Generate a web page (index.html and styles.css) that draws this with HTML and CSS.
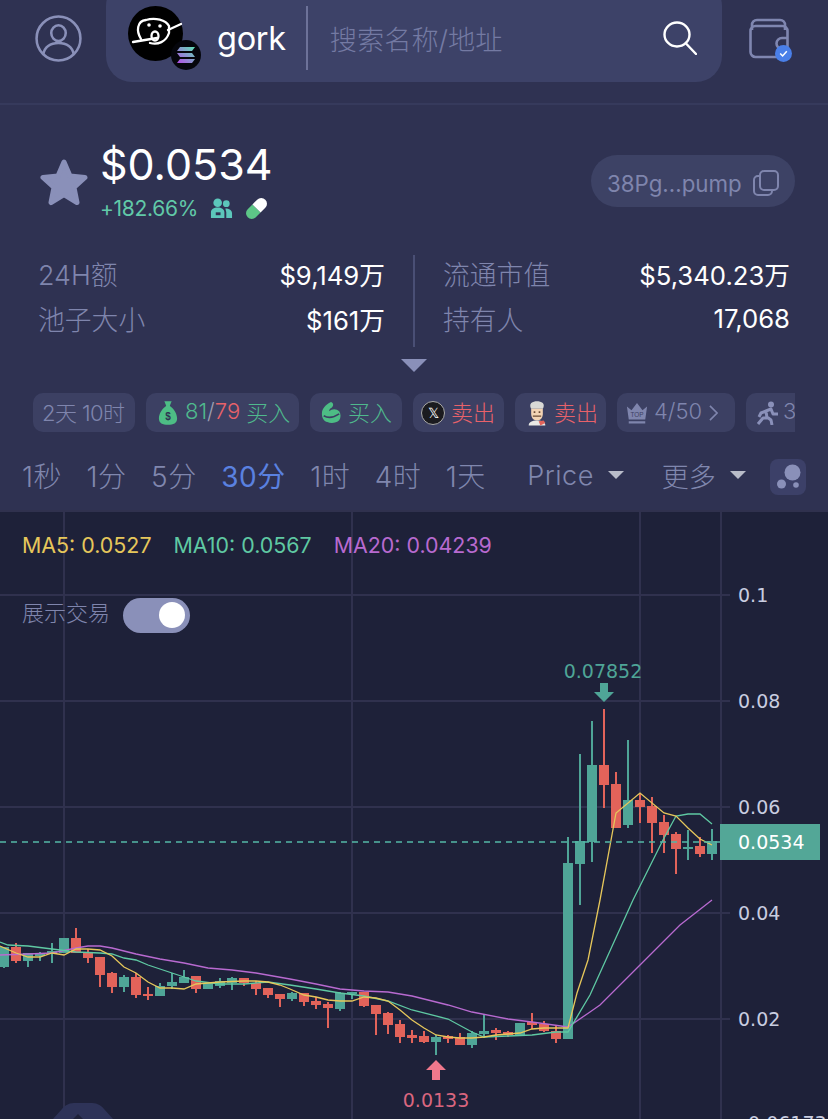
FILE: index.html
```html
<!DOCTYPE html>
<html lang="zh">
<head>
<meta charset="utf-8">
<title>gork</title>
<link rel="stylesheet" href="styles.css">
</head>
<body>
<div class="page">
  <header class="topbar">
    <svg class="user-icon" viewBox="0 0 48 48" fill="none" stroke="#8a90b9" stroke-width="2.6">
      <circle cx="24" cy="24" r="22.4"/>
      <ellipse cx="24" cy="18.5" rx="7.4" ry="8"/>
      <path d="M8.5 40c1-7 7-11.5 15.5-11.5S38.500 33 39.500 40"/>
    </svg>
    <div class="search">
      <div class="token-logo">
        <svg class="avatar" viewBox="0 0 55 55">
          <circle cx="27.500" cy="27.500" r="27.500" fill="#000"/>
          <g fill="none" stroke="#fff" stroke-width="2.300" stroke-linecap="round">
            <path d="M13 33C8 25 9 15 18 14C27 11 38 14 41 20L41 27C38 36 30 39 22 37"/>
            <path d="M5 36l24-4M40 24l13-6"/>
            <ellipse cx="27" cy="30" rx="3.500" ry="4.500"/>
          </g>
          <circle cx="21" cy="19" r="1.800" fill="#fff"/><circle cx="32" cy="20" r="1.800" fill="#fff"/>
        </svg>
        <svg class="chain" viewBox="0 0 30 30">
          <defs><linearGradient id="sol" x1="0" y1="1" x2="1" y2="0"><stop offset="0" stop-color="#b44be8"/><stop offset="1" stop-color="#5fe3b5"/></linearGradient></defs>
          <circle cx="15" cy="15" r="15" fill="#05060c"/>
          <path fill="url(#sol)" d="M9 7h15l-3 4H6zM6 13h15l3 4H9zM9 19h15l-3 4H6z"/>
        </svg>
      </div>
      <span class="token-name">gork</span>
      <span class="search-div"></span>
      <span class="placeholder">搜索名称/地址</span>
      <svg class="search-icon" viewBox="0 0 34 34" fill="none" stroke="#fff" stroke-width="2.4" stroke-linecap="round">
        <ellipse cx="14" cy="13.500" rx="12.500" ry="12"/><path d="M23 22.500l10 10.500"/>
      </svg>
    </div>
    <div class="wallet">
      <svg class="wallet-icon" viewBox="0 0 42 42" fill="none" stroke="#7f86b0" stroke-width="2.6" stroke-linejoin="round">
        <path d="M3 12V7c0-3 2-5 5-5h23c3 0 5 2 5 5v5"/>
        <rect x="1.500" y="8" width="37" height="31" rx="5"/>
        <path d="M39 20h-6a5 5 0 0 0 0 11h6"/>
      </svg>
      <span class="wallet-badge"><svg viewBox="0 0 10 10" fill="none" stroke="#fff" stroke-width="1.400"><path d="M2 5l2.200 2.200L8 3"/></svg></span>
    </div>
  </header>

  <section class="summary">
    <div class="price-row">
      <svg class="star" viewBox="0 0 48 48"><path fill="#8a90b9" stroke="#8a90b9" stroke-width="5" stroke-linejoin="round" d="M24 4l6 14 15 1.500-11 10 3 15-13-8-13 8 3-15-11-10L18 18z"/></svg>
      <div class="price-info">
        <div class="price">$0.0534</div>
        <div class="change">
          <span>+182.66%</span>
          <svg class="mini-icon" viewBox="0 0 24 22"><circle cx="8" cy="5" r="4.500" fill="#5cc7bb"/><circle cx="17" cy="6" r="3.500" fill="#5cc7bb"/><path fill="#5cc7bb" d="M1 21v-6c0-3 3-5 7-5s7 2 7 5v6zM16 11c4 0 7 2 7 5v5h-6v-6z"/><path fill="#2f3252" d="M6 15h5v3H6z"/></svg>
          <svg class="mini-icon" viewBox="0 0 24 24"><g transform="rotate(45 12 12)"><path d="M6 12h12v7a6 6 0 0 1-12 0z" fill="#5dc687"/><path d="M6 5a6 6 0 0 1 12 0v7H6z" fill="#fff"/></g></svg>
        </div>
      </div>
      <div class="address">
        <span class="address-text">38Pg...pump</span>
        <svg class="copy" viewBox="0 0 26 26" fill="none" stroke="#7f85ad" stroke-width="2"><rect x="7" y="1" width="18" height="19" rx="4"/><path d="M7 6H5a4 4 0 0 0-4 4v11a4 4 0 0 0 4 4h10a4 4 0 0 0 4-4v-1"/></svg>
      </div>
    </div>

    <div class="stats">
      <div class="stat-col">
        <div class="stat"><span class="label">24H额</span><span class="value">$9,149万</span></div>
        <div class="stat"><span class="label">池子大小</span><span class="value">$161万</span></div>
      </div>
      <div class="stat-sep"></div>
      <div class="stat-col">
        <div class="stat"><span class="label">流通市值</span><span class="value">$5,340.23万</span></div>
        <div class="stat"><span class="label">持有人</span><span class="value">17,068</span></div>
      </div>
    </div>
    <div class="expand"></div>

    <div class="tags">
      <div class="tag tag-age"><span class="muted age-text">2天 10时</span></div>
      <div class="tag tag-smart">
        <svg class="tag-icon" viewBox="0 0 22 28"><path fill="#4dbd85" d="M7 1h8l-2 5 1 1c4 3 7 8 7 13 0 5-4 7-10 7S1 25 1 20c0-5 3-10 7-13l1-1z"/><text x="11" y="22" class="bag-sign">$</text></svg>
        <span class="green">81</span><span class="muted-light">/</span><span class="red">79</span><span class="green">&nbsp;买入</span>
      </div>
      <div class="tag tag-whale">
        <svg class="tag-icon" viewBox="0 0 22 24"><path fill="#4dbd85" d="M11 0c3 1 3 4 1 6-2 1-3 2-3 4 3-3 8-3 11 0 2 3 2 7 0 10-3 3-9 4-13 2-4-1-6-5-6-9 0-6 4-10 10-13z"/><path fill="none" stroke="#3c4063" stroke-width="1.800" d="M3 15c5 3 11 2 17-2"/></svg>
        <span class="green">买入</span>
      </div>
      <div class="tag tag-x">
        <span class="x-badge">𝕏</span>
        <span class="red">卖出</span>
      </div>
      <div class="tag tag-chef">
        <svg class="tag-icon chef" viewBox="0 0 24 30">
          <path fill="#d9d9d6" d="M5 3c4-3 10-3 14 0 2 2 1 5 0 7H5C4 8 3 5 5 3z"/>
          <path fill="#f3d4b4" d="M5 10h14v6c0 5-3 8-7 8s-7-3-7-8z"/>
          <path fill="#6b4a34" d="M7 18h10v1.500H7zM8 13h2v2H8zM14 13h2v2h-2z"/>
          <path fill="#e9e9e6" d="M2 30c0-4 4-6 10-6s10 2 10 6z"/>
          <path fill="#e2635a" d="M14 25l6-1 2 3-6 3z"/>
        </svg>
        <span class="red">卖出</span>
      </div>
      <div class="tag tag-top">
        <span class="crown">
          <svg viewBox="0 0 24 24"><path fill="#7f85ad" d="M1 5l5 4 6-8 6 8 5-4-2 14H3zM3 21h18v2.500H3z"/><text x="12" y="16" class="top-text">TOP</text></svg>
        </span>
        <span class="muted">4/50</span>
        <svg class="chev" viewBox="0 0 10 18" fill="none" stroke="#7f85ad" stroke-width="1.800"><path d="M1 1l8 8-8 8"/></svg>
      </div>
      <div class="tag tag-run">
        <svg class="tag-icon run" viewBox="0 0 24 24"><circle cx="16" cy="3.500" r="3" fill="#8a90b9"/><path fill="none" stroke="#8a90b9" stroke-width="3" stroke-linejoin="round" d="M3 23l5-6h4l-1-7 5-2 2 5h5M11 10l-5 2-2 4M12 16l4 3 1 5"/></svg>
        <span class="muted">3</span>
      </div>
    </div>

    <nav class="intervals">
      <span>1秒</span><span>1分</span><span>5分</span><span class="active">30分</span><span>1时</span><span>4时</span><span>1天</span>
      <span class="dropdown first">Price<i class="caret"></i></span>
      <span class="dropdown">更多<i class="caret"></i></span>
      <span class="dots"><svg viewBox="0 0 36 36"><circle cx="22.500" cy="13.500" r="8" fill="#8a90b9"/><circle cx="11.500" cy="25" r="4.500" fill="#8a90b9"/><circle cx="26" cy="26" r="2.800" fill="#8a90b9"/></svg></span>
    </nav>
  </section>

  <section class="chart">
    <svg class="plot" viewBox="0 510 828 609">
      <path class="grid" d="M0 511H828M0 595H730M0 701H730M0 807H730M0 913H730M0 1019H730M64 510V1119M352 510V1119M640 510V1119M721 510V1119"/>
      <path class="watermark" d="M53 1119l9-10c4-5 8-6 14-6h14c6 0 10 1 14 6l9 10h-30l-5-5-5 5z"/>
      <path class="wick up" d="M4 947V968M28 953V967M40 952V961M52 943V963M64 938V953M124 975V992M160 983V996M172 973V989M184 970V983M208 983V989M220 978V988M232 977V990M292 992V1001M340 992V1011M352 992V999M436 1035V1055M472 1031V1048M484 1014V1038M520 1023V1035M568 837V1039M580 754V905M592 721V862M628 740V828M688 830V860M712 829V860"/>
      <path class="body up" d="M4 947V967M28 953V961M40 953V956M52 951V953M64 938V953M124 977V987M160 986V996M172 982V986M184 977V983M208 983V989M220 981V986M232 978V983M292 993V999M340 993V1009M352 992V994M436 1037V1042M472 1033V1045M484 1031V1034M520 1023V1035M568 863V1039M580 841V864M592 765V842M628 800V825M688 847V849M712 841V854"/>
      <path class="wick down" d="M16 943V963M76 928V953M88 949V963M100 957V987M112 972V993M136 973V998M148 987V1000M196 976V993M244 978V986M256 981V995M268 988V998M280 994V1007M304 993V1006M316 997V1009M328 1002V1028M364 992V1007M376 1005V1035M388 1012V1034M400 1020V1043M412 1030V1043M424 1031V1043M448 1035V1043M460 1033V1045M496 1028V1040M508 1031V1037M532 1013V1029M544 1021V1032M556 1026V1043M604 709V808M616 772V828M640 793V823M652 797V853M664 815V853M676 832V874M700 837V857"/>
      <path class="body down" d="M16 947V961M76 938V953M88 953V958M100 957V975M112 973V987M136 977V995M148 994V996M196 976V989M244 978V983M256 983V989M268 988V995M280 994V999M304 993V1002M316 1001V1005M328 1004V1008M364 992V1006M376 1005V1014M388 1013V1025M400 1024V1037M412 1035V1038M424 1036V1042M448 1036V1039M460 1037V1045M496 1030V1033M508 1032V1035M532 1022V1025M544 1024V1031M556 1031V1039M604 765V785M616 784V828M640 800V807M652 806V823M664 822V835M676 834V849M700 846V854"/>
      <polyline class="ma ma20" points="0,955 28,954 52,953 76,948 88,946 100,946 112,948 136,954 160,959 184,963 208,968 232,970 256,973 290,979 316,984 340,989 364,991 388,992 412,996 448,1005 472,1012 508,1019 532,1022 568,1027 590,1012 600,1005 640,965 680,925 712,900"/>
      <polyline class="ma ma10" points="0,942 8,945 28,946 52,949 76,952 100,953 112,954 124,958 136,960 148,965 172,973 184,977 196,981 220,984 244,984 268,982 290,985 316,989 340,993 364,996 388,1001 412,1010 448,1019 472,1032 484,1037 508,1036 532,1035 556,1032 568,1032 590,995 633,900 663,840 676,816 688,814 700,814 712,824"/>
      <polyline class="ma ma5" points="0,946 16,953 28,957 40,957 52,953 64,955 76,949 88,949 100,950 112,956 124,967 136,973 148,982 160,988 172,988 184,989 196,984 208,983 220,982 244,981 256,981 268,982 280,985 290,989 304,995 316,997 328,1000 340,1001 352,1001 364,997 376,998 388,1001 400,1010 412,1020 424,1028 436,1035 448,1037 460,1038 472,1038 484,1037 496,1035 508,1034 520,1033 532,1029 544,1028 568,1028 577,993 588,960 600,900 616,813 640,793 664,813 676,816 688,828 700,839 712,845"/>
      <path class="last-line" d="M0 842H720"/>
      <path class="last-tick" d="M721 842H728"/>
      <path class="arrow-high" d="M604 702l-10-10h6v-9h8v9h6z"/>
      <path class="arrow-low" d="M436 1060l10 10h-6v10h-8v-10h-6z"/>
      <text x="738" y="602" class="axis">0.1</text>
      <text x="738" y="708" class="axis">0.08</text>
      <text x="738" y="814" class="axis">0.06</text>
      <text x="738" y="920" class="axis">0.04</text>
      <text x="738" y="1026" class="axis">0.02</text>
      <text x="748" y="1130" class="axis">0.061736</text>
      <text x="603" y="678" class="mark-text high">0.07852</text>
      <text x="436" y="1107" class="mark-text low">0.0133</text>
    </svg>
    <div class="price-tag">0.0534</div>
    <div class="legend">
      <span class="ma5-text">MA5: 0.0527</span>
      <span class="ma10-text">MA10: 0.0567</span>
      <span class="ma20-text">MA20: 0.04239</span>
    </div>
    <div class="toggle-row">
      <span class="toggle-label">展示交易</span>
      <span class="toggle"><i class="knob"></i></span>
    </div>
  </section>
</div>
</body>
</html>
```
FILE: styles.css
```css
* { box-sizing: border-box; }
html, body { margin: 0; padding: 0; }
body {
  background: #2f3252;
  font-family: Inter, "Noto Sans CJK SC", sans-serif;
  color: #fff;
}
.page { width: 828px; height: 1119px; overflow: hidden; display: flex; flex-direction: column; }

/* top bar */
.topbar {
  height: 105px;
  flex: none;
  display: flex;
  align-items: flex-start;
  padding-left: 35px;
  border-bottom: 2px solid #363a5c;
}
.user-icon { width: 47px; height: 47px; margin-top: 15px; flex: none; }
.search {
  width: 616px;
  height: 102px;
  margin: -20px 0 0 24px;
  padding: 14px 25px 0 22px;
  background: #3d4268;
  border-radius: 26px;
  display: flex;
  align-items: center;
  flex: none;
}
.token-logo { position: relative; width: 55px; height: 55px; margin-top: -10px; flex: none; }
.avatar { width: 55px; height: 55px; display: block; }
.chain { position: absolute; left: 43px; top: 34px; width: 30px; height: 30px; }
.token-name { font-size: 32.500px; margin-left: 34px; letter-spacing: -0.3px; }
.search-div { width: 2px; height: 64px; background: #6d7299; margin: 0 22px 0 20px; }
.placeholder { font-size: 27.200px; font-weight: 300; color: #747aa3; flex: 1; }
.search-icon { width: 34px; height: 34px; flex: none; }
.wallet { position: relative; margin: 18px 0 0 27px; width: 44px; height: 42px; flex: none; }
.wallet-icon { width: 42px; height: 42px; display: block; }
.wallet-badge {
  position: absolute;
  right: 1px;
  bottom: -2px;
  width: 17px;
  height: 17px;
  border-radius: 50%;
  background: #4a7fe8;
  display: flex;
  align-items: center;
  justify-content: center;
}
.wallet-badge svg { width: 11px; height: 11px; }

/* price + stats */
.summary { flex: none; height: 405px; padding: 35px 33px 0 33px; display: flex; flex-direction: column; }
.price-row { display: flex; align-items: flex-start; height: 79px; }
.star { width: 48px; height: 48px; margin: 18px 12px 0 7px; flex: none; }
.price-info { flex: 1; }
.price { font-size: 43px; line-height: 48px; height: 48px; }
.change { display: flex; align-items: center; font-size: 21px; color: #61c9a8; height: 28px; margin-top: 6px; letter-spacing: -0.3px; }
.mini-icon { width: 23px; height: 23px; margin-left: 12px; }
.address {
  width: 204px;
  height: 52px;
  margin-top: 15px;
  background: #3d4265;
  border-radius: 26px;
  padding-left: 16px;
  display: flex;
  align-items: center;
  gap: 11px;
  color: #7f85ad;
  font-size: 22.300px;
  flex: none;
}
.address-text { margin-top: 4px; }
.copy { width: 26px; height: 26px; flex: none; margin-top: 3px; }
.stats { display: flex; height: 96px; margin: 32px 5px 0 5px; }
.stat-col { flex: 1; display: flex; flex-direction: column; }
.stat { height: 45px; display: flex; justify-content: space-between; align-items: center; }
.label { color: #7f85ad; font-weight: 300; font-size: 26.800px; }
.value { color: #fff; font-size: 25.700px; margin-right: 0; }
.stat-sep { width: 2px; background: #4a4f75; margin: 4px 28px 0; flex: none; }
.expand {
  width: 0;
  height: 0;
  margin: 12px auto 0;
  border-left: 13px solid transparent;
  border-right: 13px solid transparent;
  border-top: 13px solid #8a90b9;
  flex: none;
}
.tags { display: flex; gap: 11px; height: 39px; margin-top: 21px; overflow: hidden; width: 762px; flex: none; }
.tag {
  flex: none;
  height: 39px;
  padding: 0 0 3px 9px;
  display: flex;
  align-items: center;
  background: #3c4063;
  border-radius: 10px;
  font-size: 22px;
  font-weight: 300;
}
.tag-age { width: 102px; }
.age-text { letter-spacing: -0.600px; }
.tag-smart { width: 153px; padding-left: 12px; }
.tag-whale { width: 92px; padding-left: 11px; }
.tag-x { width: 91px; padding-left: 8px; }
.tag-chef { width: 91px; padding-left: 12px; }
.tag-top { width: 118px; }
.tag-run { width: 70px; }
.tag-icon { width: 20px; height: 26px; margin: 3px 7px 0 0; flex: none; }
.muted { color: #7f85ad; }
.muted-light { color: #9a9eb0; }
.green { color: #4fb98d; }
.red { color: #e8626a; }
.x-badge {
  width: 24px;
  height: 24px;
  border-radius: 50%;
  background: #1b1b1f;
  border: 1px solid #aaa;
  color: #fff;
  font-size: 14px;
  display: flex;
  align-items: center;
  justify-content: center;
  margin: 3px 6px 0 0;
  font-family: "DejaVu Sans", sans-serif;
}
.bag-sign { font-size: 11px; fill: #2f3252; text-anchor: middle; font-family: "Liberation Sans", sans-serif; font-weight: 700; }
.crown { width: 22px; height: 24px; margin: 3px 6px 0 0; display: block; }
.crown svg { width: 22px; height: 24px; display: block; }
.top-text { font-size: 7px; fill: #3c4063; text-anchor: middle; font-family: "Liberation Sans", sans-serif; }
.chev { width: 9px; height: 16px; margin: 3px 0 0 7px; }
.run { width: 24px; height: 24px; margin-right: 4px; }
.intervals { display: flex; align-items: center; gap: 24.500px; height: 36px; margin: 25px 0 0 -11px; font-size: 28px; font-weight: 300; color: #8087ae; width: 784px; letter-spacing: 0.5px; flex: none; white-space: nowrap; }
.intervals span { flex: none; }
.intervals .active { color: #5a81e0; font-weight: 400; }
.dropdown { display: flex; align-items: center; gap: 14px; font-size: 27px; margin-left: 13.500px; letter-spacing: 0; }
.dropdown.first { margin-left: 17px; letter-spacing: 0.5px; }
.caret { width: 0; height: 0; border-left: 8.500px solid transparent; border-right: 8.500px solid transparent; border-top: 8px solid #b9bcc9; }
.dots { width: 36px; height: 36px; background: #3c4068; border-radius: 8px; margin: 4px 0 0 -0.500px; }
.dots svg { width: 36px; height: 36px; display: block; }

/* chart */
.chart { position: relative; flex: 1; background: #1e2139; padding: 21px 0 0 22px; overflow: hidden; }
.plot { position: absolute; left: 0; top: 0; width: 828px; height: 609px; }
.grid { stroke: #30314e; stroke-width: 2; fill: none; }
.watermark { fill: #2e3358; }
.wick { fill: none; stroke-width: 2; }
.body { fill: none; stroke-width: 10; }
.up { stroke: #4fa597; }
.down { stroke: #e2635a; }
.ma { fill: none; stroke-width: 1.300; }
.ma5 { stroke: #e6c75b; }
.ma10 { stroke: #5fc9a3; }
.ma20 { stroke: #b86ad0; }
.last-line { stroke: #54b8a6; stroke-width: 1.500; stroke-dasharray: 6 5; }
.last-tick { stroke: #fff; stroke-width: 2; }
.arrow-high { fill: #4fa597; }
.arrow-low { fill: #f0788c; }
.axis { fill: #c9cde0; font-size: 19px; font-family: "DejaVu Sans", sans-serif; }
.mark-text { font-size: 19px; font-family: "DejaVu Sans", sans-serif; text-anchor: middle; }
.high { fill: #4fa597; }
.low { fill: #d9667f; }
.price-tag {
  position: absolute;
  left: 720px;
  top: 314px;
  width: 100px;
  height: 36px;
  background: #53a797;
  color: #fff;
  font: 19px/36px "DejaVu Sans", sans-serif;
  padding-left: 18px;
}
.legend { position: relative; display: flex; gap: 22px; font-size: 21.400px; height: 28px; align-items: center; }
.ma5-text { color: #e6c75b; }
.ma10-text { color: #5fc9a3; }
.ma20-text { color: #b86ad0; }
.toggle-row { position: relative; display: flex; align-items: center; gap: 13px; margin-top: 38px; height: 36px; }
.toggle-label { font-size: 22px; font-weight: 300; color: #7f85ad; padding-bottom: 8px; }
.toggle { width: 67px; height: 35px; background: #8a90b9; border-radius: 18px; display: flex; align-items: center; justify-content: flex-end; padding-right: 5px; }
.knob { width: 26px; height: 26px; border-radius: 50%; background: #fff; display: block; }
```
